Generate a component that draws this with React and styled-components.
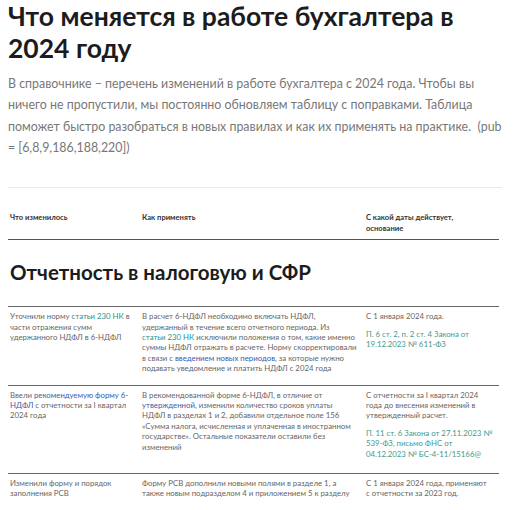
import React from 'react';
import styled, { createGlobalStyle } from 'styled-components';

const GlobalStyle = createGlobalStyle`
  body {
    margin: 0;
    background: #fff;
    font-family: Lato, 'Open Sans', sans-serif;
    color: #222;
  }
`;

// lines are kept as in the source layout; [t:..] teal link, [b:..] blue link
const rows = [
  {
    pad: 11,
    what: ['Уточнили норму [t:статьи 230 НК] в', 'части отражения сумм', 'удержанного НДФЛ в 6-НДФЛ'],
    how: [
      'В расчет 6-НДФЛ необходимо включать НДФЛ,',
      'удержанный в течение всего отчетного периода. Из',
      '[t:статьи 230 НК] исключили положения о том, какие именно',
      'суммы НДФЛ отражать в расчете. Норму скорректировали',
      'в связи с [b:введением новых периодов], за которые нужно',
      'подавать уведомление и платить НДФЛ с 2024 года',
    ],
    when: ['С 1 января 2024 года.'],
    basis: ['П. 6 ст. 2, п. 2 ст. 4 Закона от', '19.12.2023 № 611-ФЗ'],
  },
  {
    pad: 14,
    what: ['Ввели [b:рекомендуемую форму 6-]', '[b:НДФЛ] с отчетности за I квартал', '2024 года'],
    how: [
      'В рекомендованной форме 6-НДФЛ, в отличие от',
      '[b:утвержденной], изменили количество сроков уплаты',
      'НДФЛ в разделах 1 и 2, добавили отдельное поле 156',
      '«Сумма налога, исчисленная и уплаченная в иностранном',
      'государстве». Остальные показатели оставили без',
      'изменений',
    ],
    when: ['С отчетности за I квартал 2024', 'года до внесения изменений в', 'утвержденный расчет.'],
    basis: ['П. 11 ст. 6 Закона от 27.11.2023 №', '539-ФЗ, письмо ФНС от', '04.12.2023 № БС-4-11/15166@'],
  },
  {
    pad: 14,
    what: ['Изменили форму и порядок', 'заполнения РСВ'],
    how: [
      'Форму РСВ дополнили новыми полями в разделе 1, а',
      'также новым подразделом 4 и приложением 5 к разделу',
    ],
    when: ['С 1 января 2024 года, применяют', 'с отчетности за 2023 год.'],
  },
];

const Line = ({ text }) => (
  <LineBox>
    {text.split(/(\[[tb]:[^\]]+\])/).map((p, i) => {
      const m = p.match(/^\[([tb]):(.+)\]$/);
      return m ? (
        <Link key={i} $tone={m[1]}>
          {m[2]}
        </Link>
      ) : (
        <React.Fragment key={i}>{p}</React.Fragment>
      );
    })}
  </LineBox>
);

const Lines = ({ lines }) => lines.map((l, i) => <Line key={i} text={l} />);

export default function App() {
  return (
    <Page>
      <GlobalStyle />
      <Title>Что меняется в работе бухгалтера в 2024 году</Title>
      <Lead>
        <Lines
          lines={[
            'В справочнике – перечень изменений в работе бухгалтера с 2024 года. Чтобы вы',
            'ничего не пропустили, мы постоянно обновляем таблицу с поправками. Таблица',
            'поможет быстро разобраться в новых правилах и как их применять на практике.  (pub',
            '= [6,8,9,186,188,220])',
          ]}
        />
      </Lead>
      <Divider />
      <HeadRow>
        <HeadCell>Что изменилось</HeadCell>
        <HeadCell>Как применять</HeadCell>
        <HeadCell>
          <Lines lines={['С какой даты действует,', 'основание']} />
        </HeadCell>
      </HeadRow>
      <Section>Отчетность в налоговую и СФР</Section>
      {rows.map((r, i) => (
        <Row key={i} $pad={r.pad}>
          <Cell>
            <Lines lines={r.what} />
          </Cell>
          <Cell>
            <Lines lines={r.how} />
          </Cell>
          <Cell>
            <Lines lines={r.when} />
            {r.basis && (
              <Basis>
                <Lines lines={r.basis} />
              </Basis>
            )}
          </Cell>
        </Row>
      ))}
    </Page>
  );
}

const Page = styled.div`
  width: 500px;
  padding: 0 0 0 8px;
  overflow: hidden;
  height: 510px;
`;

const Title = styled.h1`
  margin: 0;
  max-width: 470px;
  font-size: 26.5px;
  line-height: 32px;
  font-weight: 700;
  color: #1c1c1c;
`;

const LineBox = styled.span`
  display: block;
  white-space: pre;
`;

const Lead = styled.div`
  margin: 9px 0 0;
  font-size: 12.4px;
  line-height: 21.3px;
  color: #777;
`;

const Divider = styled.hr`
  margin: 29px 0 0;
  width: 494px;
  border: 0;
  border-top: 1px solid #eaeaea;
`;

const grid = `
  display: grid;
  grid-template-columns: 132px 224px 1fr;
  width: 489px;
`;

const HeadRow = styled.div`
  ${grid};
  margin-top: 24px;
  padding: 0 0 5px 2px;
  border-bottom: 1.5px solid #555;
`;

const HeadCell = styled.div`
  font-size: 7.6px;
  line-height: 11px;
  font-weight: 700;
  color: #333;
`;

const Section = styled.h2`
  margin: 18px 0 0 2px;
  font-size: 20.5px;
  line-height: 28px;
  font-weight: 700;
  color: #1c1c1c;
`;

const Row = styled.div`
  ${grid};
  margin-top: 20px;
  padding: 4px 0 ${(p) => p.$pad}px 2px;
  border-top: 1.5px solid #666;
  & + & { margin-top: 0; }
`;

const Cell = styled.div`
  font-size: 7.8px;
  line-height: 10.4px;
  color: #666;
`;

const Basis = styled.div`
  margin-top: 7px;
  color: #3f9a8c;
`;

const Link = styled.span`
  color: ${(p) => (p.$tone === 't' ? '#2e8f8a' : '#3c5aa8')};
`;
